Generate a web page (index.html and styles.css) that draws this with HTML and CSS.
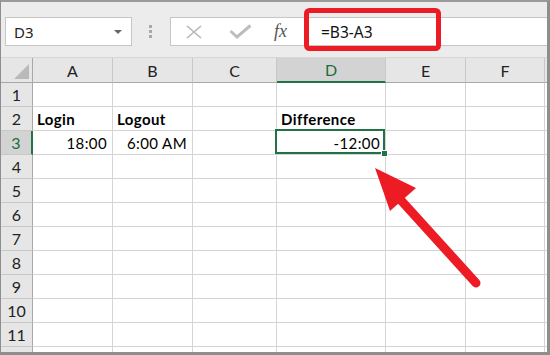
FILE: index.html
```html
<!DOCTYPE html>
<html lang="en">
<head>
<meta charset="UTF-8">
<title>Difference</title>
<link rel="stylesheet" href="styles.css">
</head>
<body>
<div class="window">
  <div class="toolbar">
    <div class="name-box">
      <span>D3</span>
      <span class="drop"></span>
    </div>
    <div class="grip"><i></i><i></i><i></i></div>
    <div class="formula-box">
      <svg class="icon-x" width="16" height="14" viewBox="0 0 16 14">
        <path d="M1 1 L15 13 M15 1 L1 13" stroke="#b5b5b5" stroke-width="1.6" fill="none"/>
      </svg>
      <svg class="icon-ok" width="23" height="15" viewBox="0 0 23 15">
        <path d="M1.5 7 L8 13 L21.5 1.5" stroke="#bdbdbd" stroke-width="3" fill="none"/>
      </svg>
      <span class="fx">fx</span>
      <span class="formula">=B3-A3</span>
    </div>
  </div>

  <div class="sheet">
    <div class="corner"><span class="tri"></span></div>
    <div class="hd">A</div>
    <div class="hd">B</div>
    <div class="hd">C</div>
    <div class="hd sel">D</div>
    <div class="hd">E</div>
    <div class="hd">F</div>
    <div class="hd end"></div>

    <div class="rh">1</div>
    <div class="c"></div><div class="c"></div><div class="c"></div><div class="c"></div><div class="c"></div><div class="c"></div><div class="c end"></div>

    <div class="rh">2</div>
    <div class="c b">Login</div><div class="c b">Logout</div><div class="c"></div><div class="c b">Difference</div><div class="c"></div><div class="c"></div><div class="c end"></div>

    <div class="rh sel">3</div>
    <div class="c r">18:00</div><div class="c r">6:00 AM</div><div class="c"></div><div class="c r active">-12:00</div><div class="c"></div><div class="c"></div><div class="c end"></div>

    <div class="rh">4</div>
    <div class="c"></div><div class="c"></div><div class="c"></div><div class="c"></div><div class="c"></div><div class="c"></div><div class="c end"></div>
    <div class="rh">5</div>
    <div class="c"></div><div class="c"></div><div class="c"></div><div class="c"></div><div class="c"></div><div class="c"></div><div class="c end"></div>
    <div class="rh">6</div>
    <div class="c"></div><div class="c"></div><div class="c"></div><div class="c"></div><div class="c"></div><div class="c"></div><div class="c end"></div>
    <div class="rh">7</div>
    <div class="c"></div><div class="c"></div><div class="c"></div><div class="c"></div><div class="c"></div><div class="c"></div><div class="c end"></div>
    <div class="rh">8</div>
    <div class="c"></div><div class="c"></div><div class="c"></div><div class="c"></div><div class="c"></div><div class="c"></div><div class="c end"></div>
    <div class="rh">9</div>
    <div class="c"></div><div class="c"></div><div class="c"></div><div class="c"></div><div class="c"></div><div class="c"></div><div class="c end"></div>
    <div class="rh">10</div>
    <div class="c"></div><div class="c"></div><div class="c"></div><div class="c"></div><div class="c"></div><div class="c"></div><div class="c end"></div>
    <div class="rh">11</div>
    <div class="c"></div><div class="c"></div><div class="c"></div><div class="c"></div><div class="c"></div><div class="c"></div><div class="c end"></div>
    <div class="rh">12</div>
    <div class="c"></div><div class="c"></div><div class="c"></div><div class="c"></div><div class="c"></div><div class="c"></div><div class="c end"></div>
  </div>

  <!-- annotation drawn over the screenshot -->
  <svg class="marks" width="550" height="355" viewBox="0 0 550 355">
    <rect x="306.5" y="10.5" width="132" height="38" rx="3" fill="none" stroke="#ed1c24" stroke-width="5"/>
    <line x1="398" y1="197" x2="476" y2="283" stroke="#ed1c24" stroke-width="9" stroke-linecap="round"/>
    <polygon points="375,168 416,188 390,211" fill="#ed1c24"/>
  </svg>
</div>
</body>
</html>
```

FILE: styles.css
```css
body {
  margin: 0;
  padding: 0;
  background: #fff;
}

.window {
  position: relative;
  width: 550px;
  height: 355px;
  box-sizing: border-box;
  border: 1px solid #8e8e8e;
  border-top: 2px solid #9a9a9a;
  border-right: 3px solid #8e8e8e;
  border-bottom: 3px solid #8e8e8e;
  overflow: hidden;
  font-family: Lato, "Liberation Sans", sans-serif;
}

.toolbar {
  display: flex;
  align-items: center;
  height: 56px;
  box-sizing: border-box;
  padding: 15px 0 11px 4px;
  background: #ececec;
  border-bottom: 1px solid #d6d6d6;
  font-family: "Noto Sans", "Open Sans", sans-serif;
}

.name-box {
  display: flex;
  align-items: center;
  justify-content: space-between;
  width: 127px;
  height: 29px;
  box-sizing: border-box;
  padding: 0 9px 0 8px;
  background: #fff;
  border: 1px solid #c6c6c6;
  font-size: 15px;
  color: #222;
}

.drop {
  width: 0;
  height: 0;
  border-left: 4px solid transparent;
  border-right: 4px solid transparent;
  border-top: 4px solid #666;
}

.grip {
  display: flex;
  flex-direction: column;
  gap: 2px;
  margin: 0 18px 0 17px;
}

.grip i {
  display: block;
  width: 3px;
  height: 3px;
  background: #a8a8a8;
}

.formula-box {
  flex: 1;
  display: flex;
  align-items: center;
  height: 29px;
  box-sizing: border-box;
  padding-left: 15px;
  background: #fff;
  border: 1px solid #c6c6c6;
  border-right: none;
}

.icon-ok {
  margin-left: 27px;
}

.fx {
  margin-left: 22px;
  font-family: "Liberation Serif", serif;
  font-style: italic;
  font-size: 18px;
  color: #555;
}

.formula {
  margin-left: 34px;
  font-size: 15.5px;
  color: #111;
}

.sheet {
  display: grid;
  grid-template-columns: 32px 80px 80px 84px 109px 80px 79px 1fr;
  grid-template-rows: 25px repeat(12, 24px);
  height: 294px;
  overflow: hidden;
}

.corner,
.hd,
.rh {
  background: #e6e6e6;
  color: #222;
  font-size: 16px;
  display: flex;
  align-items: center;
  justify-content: center;
  box-sizing: border-box;
}

.corner {
  position: relative;
  border-right: 1px solid #a8a8a8;
  border-bottom: 1px solid #a8a8a8;
}

.tri {
  position: absolute;
  right: 3px;
  bottom: 3px;
  width: 0;
  height: 0;
  border-left: 15px solid transparent;
  border-bottom: 15px solid #b9b9b9;
}

.hd {
  border-right: 1px solid #c8c8c8;
  border-bottom: 1px solid #a8a8a8;
}

.hd.sel {
  background: #d3d3d3;
  color: #1d6b40;
  border-bottom: 2px solid #217346;
}

.hd.end {
  border-right: none;
}

.rh {
  border-right: 1px solid #a8a8a8;
  border-bottom: 1px solid #c8c8c8;
}

.rh.sel {
  background: #d3d3d3;
  color: #1d6b40;
  border-right: 2px solid #217346;
}

.c {
  display: flex;
  align-items: flex-end;
  box-sizing: border-box;
  padding: 0 4px 3px 4px;
  font-size: 15px;
  letter-spacing: 0.4px;
  line-height: 16px;
  white-space: nowrap;
  color: #000;
  border-right: 1px solid #d4d4d4;
  border-bottom: 1px solid #d4d4d4;
}

.c.end {
  border-right: none;
}

.b {
  font-weight: bold;
}

.r {
  justify-content: flex-end;
  padding-right: 5px;
}

.active {
  position: relative;
}

.active::after {
  content: "";
  position: absolute;
  top: -2px;
  left: -2px;
  right: 0;
  bottom: 0;
  border: 2px solid #217346;
}

.active::before {
  content: "";
  position: absolute;
  right: -3px;
  bottom: -3px;
  width: 5px;
  height: 5px;
  background: #217346;
  border: 1px solid #fff;
  z-index: 1;
}

.marks {
  position: absolute;
  top: -2px;
  left: -1px;
  pointer-events: none;
}
```
